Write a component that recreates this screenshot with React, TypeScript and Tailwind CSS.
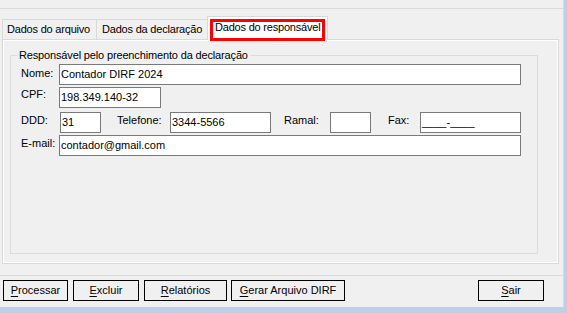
import React from "react";

const font = "font-['Liberation_Sans',Arial,sans-serif]";

function Input({ w, value }: { w: string; value?: string }) {
  return (
    <div
      className={`${w} h-[21px] shrink-0 border border-[#7a7a7a] bg-white flex items-center pl-[1px] text-[11px] leading-[13px] text-black whitespace-nowrap overflow-hidden`}
    >
      {value}
    </div>
  );
}

function Label({ w, ml, children }: { w: string; ml?: string; children: React.ReactNode }) {
  return (
    <div className={`${w} ${ml ?? ""} shrink-0 mt-[2px] text-[11px] leading-[13px] text-black whitespace-nowrap`}>
      {children}
    </div>
  );
}

function Btn({ w, first, rest, ml }: { w: string; first: string; rest: string; ml: string }) {
  return (
    <div
      className={`${w} ${ml} h-[21px] shrink-0 border border-black bg-[#f0f0f0] flex items-center justify-center text-[11px] leading-[13px] text-black whitespace-nowrap`}
    >
      <span className="underline underline-offset-[2px]">{first}</span>
      {rest}
    </div>
  );
}

export default function App() {
  return (
    <div className={`${font} w-[567px] h-[313px] bg-[#f0f0f0] flex flex-col overflow-hidden`}>
      <div className="flex h-[307px]">
        <div className="w-[564px] border-r border-[#dadada] flex flex-col">
          {/* top line */}
          <div className="h-[9px] border-b border-[#dadada] shrink-0" />
          {/* tabs */}
          <div className="mt-[7px] h-[23px] flex items-end pl-[2px] shrink-0 relative z-10 text-[11px] leading-[13px] tracking-[-0.2px] text-black">
            <div className="w-[95px] h-[20px] border border-b-0 border-[#d9d9d9] pl-[4px] pt-[3px] whitespace-nowrap">
              Dados do arquivo
            </div>
            <div className="w-[110px] h-[20px] border-t border-[#d9d9d9] pl-[5px] pt-[3px] whitespace-nowrap">
              Dados da declaração
            </div>
            <div className="relative w-[121px] h-[24px] -mb-px border border-b-0 border-[#d9d9d9] bg-white pl-[7px] pt-[4px] whitespace-nowrap">
              Dados do responsável
              <div className="absolute left-[2px] top-[2px] w-[115px] h-[22px] border-[3px] border-[#ff0000]" />
            </div>
          </div>
          {/* panel */}
          <div className="ml-[2px] w-[557px] h-[225px] shrink-0 border border-[#d9d9d9]">
            <div className="w-full h-full border border-white bg-[#f0f0f0] pl-[6px] pt-[14px]">
              <div className="relative w-[528px] h-[199px] border border-[#dcdcdc] pl-[10px] pt-[8px]">
                <div className="absolute -top-[7px] left-[6px] px-[2px] bg-[#f0f0f0] text-[11px] leading-[13px] tracking-[-0.15px] text-black whitespace-nowrap">
                  Responsável pelo preenchimento da declaração
                </div>
                <div className="flex items-start">
                  <Label w="w-[38px]">
                    <span className="relative top-[1px]">Nome:</span>
                  </Label>
                  <Input w="w-[462px]" value="Contador DIRF 2024" />
                </div>
                <div className="flex items-start mt-[2px]">
                  <Label w="w-[38px]">
                    <span className="relative -top-[1px]">CPF:</span>
                  </Label>
                  <Input w="w-[102px]" value="198.349.140-32" />
                </div>
                <div className="flex items-start mt-[4px]">
                  <Label w="w-[39px]">DDD:</Label>
                  <Input w="w-[41px]" value="31" />
                  <Label w="w-[53px]" ml="ml-[16px]">Telefone:</Label>
                  <Input w="w-[101px]" value="3344-5566" />
                  <Label w="w-[46px]" ml="ml-[13px]">Ramal:</Label>
                  <Input w="w-[41px]" />
                  <Label w="w-[32px]" ml="ml-[17px]">Fax:</Label>
                  <Input w="w-[101px]" value="____-____" />
                </div>
                <div className="flex items-start mt-[2px]">
                  <Label w="w-[38px]">E-mail:</Label>
                  <Input w="w-[462px]" value="contador@gmail.com" />
                </div>
              </div>
            </div>
          </div>
          {/* separator */}
          <div className="mt-[11px] border-t border-[#dadada] shrink-0" />
          {/* buttons */}
          <div className="mt-[4px] flex items-start shrink-0">
            <Btn w="w-[65px]" ml="ml-[3px]" first="P" rest="rocessar" />
            <Btn w="w-[66px]" ml="ml-[5px]" first="E" rest="xcluir" />
            <Btn w="w-[83px]" ml="ml-[5px]" first="R" rest="elatórios" />
            <Btn w="w-[114px]" ml="ml-[4px]" first="G" rest="erar Arquivo DIRF" />
            <Btn w="w-[66px]" ml="ml-[133px]" first="S" rest="air" />
          </div>
        </div>
        <div className="flex-1 bg-[#b9d1ea]" />
      </div>
      <div className="flex-1 bg-[#b9d1ea]" />
    </div>
  );
}
